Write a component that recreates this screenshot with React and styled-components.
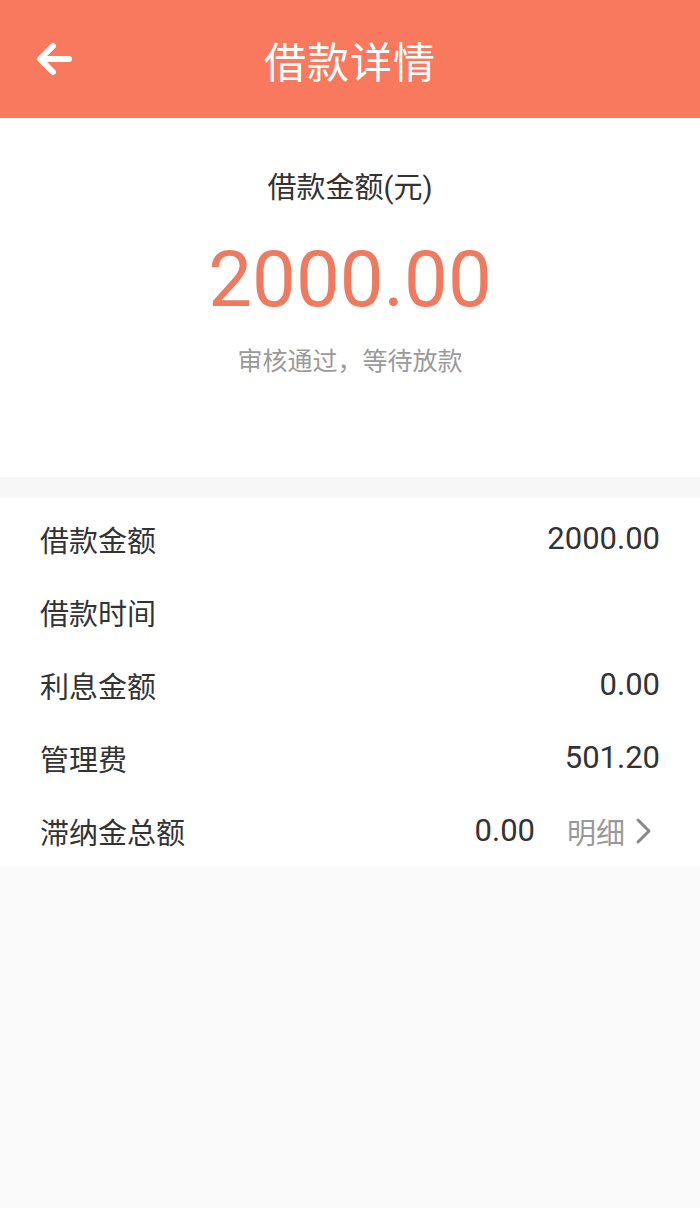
import React from "react";
import styled, { createGlobalStyle } from "styled-components";

const GlobalStyle = createGlobalStyle`
	html, body {
		margin: 0;
		padding: 0;
		background: #fafafa;
	}
	body {
		font-family: Roboto, "Noto Sans CJK SC", "Noto Sans", sans-serif;
		color: #333333;
	}
`;

const Page = styled.div`
	width: 700px;
	min-height: 1208px;
	background: #fafafa;
	display: flex;
	flex-direction: column;
`;

const Header = styled.header`
	height: 118px;
	background: #f8795d;
	display: flex;
	align-items: center;
	justify-content: center;
	position: relative;
`;

const BackButton = styled.button`
	position: absolute;
	left: 30px;
	top: 50%;
	transform: translateY(-50%);
	width: 48px;
	height: 48px;
	padding: 0;
	border: none;
	background: transparent;
	display: flex;
	align-items: center;
	justify-content: center;
`;

const Title = styled.h1`
	margin: 0;
	font-size: 42px;
	font-weight: 400;
	color: #ffffff;
	letter-spacing: 1px;
`;

const Summary = styled.section`
	background: #ffffff;
	display: flex;
	flex-direction: column;
	align-items: center;
	padding: 50px 0 98px;
`;

const SummaryLabel = styled.div`
	font-size: 29px;
	line-height: 40px;
	color: #333333;
`;

const Amount = styled.div`
	margin-top: 22px;
	font-size: 78px;
	line-height: 100px;
	color: #ee7a5f;
	font-family: Roboto, sans-serif;
`;

const Status = styled.div`
	margin-top: 15px;
	font-size: 25px;
	line-height: 34px;
	color: #9a9a9a;
`;

const Divider = styled.div`
	height: 21px;
	background: #f7f7f7;
`;

const List = styled.section`
	background: #ffffff;
	padding-top: 4px;
`;

const Row = styled.div`
	height: 73px;
	padding: 0 40px;
	display: flex;
	align-items: center;
	justify-content: space-between;
	font-size: 29px;
`;

const RowLabel = styled.span`
	color: #333333;
`;

const RowValue = styled.span`
	display: flex;
	align-items: center;
	color: #333333;
	font-size: 31px;
`;

const DetailLink = styled.span`
	display: flex;
	align-items: center;
	margin-left: 32px;
	padding-right: 8px;
	color: #999999;
	font-size: 29px;
	gap: 9px;
`;

const rows = [
	{ label: "借款金额", value: "2000.00" },
	{ label: "借款时间", value: "" },
	{ label: "利息金额", value: "0.00" },
	{ label: "管理费", value: "501.20" },
	{ label: "滞纳金总额", value: "0.00", detail: true },
];

export default function App() {
	return (
		<Page>
			<GlobalStyle />
			<Header>
				<BackButton>
					<svg width="40" height="36" viewBox="0 0 40 36" fill="none" stroke="#ffffff" strokeWidth="6" strokeLinecap="round" strokeLinejoin="round">
						<path d="M35 18H7"></path>
						<path d="M19 5L6 18l13 13"></path>
					</svg>
				</BackButton>
				<Title>借款详情</Title>
			</Header>

			<Summary>
				<SummaryLabel>借款金额(元)</SummaryLabel>
				<Amount>2000.00</Amount>
				<Status>审核通过，等待放款</Status>
			</Summary>

			<Divider />

			<List>
				{rows.map((row) => (
					<Row key={row.label}>
						<RowLabel>{row.label}</RowLabel>
						<RowValue>
							{row.value}
							{row.detail && (
								<DetailLink>
									明细
									<svg width="18" height="28" viewBox="0 0 18 28" fill="none" stroke="#888888" strokeWidth="3" strokeLinecap="round" strokeLinejoin="round">
										<path d="M4 3l11 11L4 25"></path>
									</svg>
								</DetailLink>
							)}
						</RowValue>
					</Row>
				))}
			</List>
		</Page>
	);
}
